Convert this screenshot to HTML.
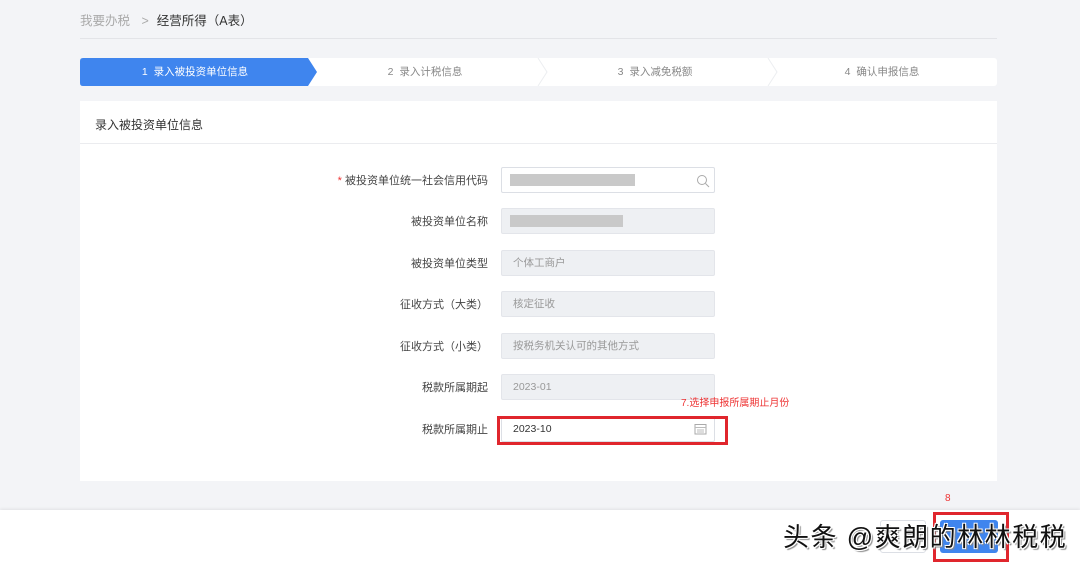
<!DOCTYPE html>
<html><head><meta charset="utf-8"><style>
*{margin:0;padding:0;box-sizing:border-box}
body{width:1080px;height:563px;background:#f3f4f7;font-family:"Liberation Sans","Noto Sans CJK SC",sans-serif;position:relative;overflow:hidden}
.a{position:absolute}
.lbl{position:absolute;right:592px;font-size:11px;color:#444;text-align:right;white-space:nowrap}
.inp{position:absolute;left:501px;width:214px;height:26px;background:#eef0f3;border:1px solid #e3e5ea;border-radius:2px;font-size:10.5px;color:#999;padding-left:11px;line-height:24px}
.gray{position:absolute;left:510px;width:125px;height:12px;background:#c9c9c9}
</style></head><body>
<div class="a" style="left:80px;top:10px;font-size:12.5px;color:#aaa">我要办税 <span style="margin:0 8px">&gt;</span><span style="color:#333">经营所得（A表）</span></div>
<div class="a" style="left:80px;top:38px;width:917px;height:1px;background:#e3e4e8"></div>
<div class="a" style="left:80px;top:58px;width:917px;height:28px;background:#fff;border-radius:3px"></div>
<svg class="a" style="left:80px;top:58px" width="917" height="28">
<path d="M3 0H228L237 14L228 28H3Q0 28 0 25V3Q0 0 3 0Z" fill="#3f85ee"/>
<path d="M458 0L467 14L458 28M688 0L697 14L688 28" fill="none" stroke="#eceef1"/>
</svg>
<div class="a" style="left:80px;top:58px;width:230px;line-height:28px;text-align:center;font-size:10.5px;color:#fff">1&nbsp; 录入被投资单位信息</div>
<div class="a" style="left:310px;top:58px;width:230px;line-height:28px;text-align:center;font-size:10.5px;color:#888">2&nbsp; 录入计税信息</div>
<div class="a" style="left:540px;top:58px;width:230px;line-height:28px;text-align:center;font-size:10.5px;color:#888">3&nbsp; 录入减免税额</div>
<div class="a" style="left:767px;top:58px;width:230px;line-height:28px;text-align:center;font-size:10.5px;color:#888">4&nbsp; 确认申报信息</div>
<div class="a" style="left:80px;top:101px;width:917px;height:380px;background:#fff"></div>
<div class="a" style="left:95px;top:116px;font-size:12px;color:#333">录入被投资单位信息</div>
<div class="a" style="left:80px;top:143px;width:917px;height:1px;background:#ebecef"></div>

<div class="lbl" style="top:172px"><span style="color:#e33">* </span>被投资单位统一社会信用代码</div>
<div class="inp" style="top:167px;background:#fff;border-color:#dcdfe5"></div><div class="gray" style="top:174px"></div>
<svg class="a" style="left:696px;top:174px" width="14" height="14"><circle cx="6" cy="6" r="4.5" fill="none" stroke="#aaa"/><path d="M9.5 9.5L13 13" stroke="#aaa"/></svg>
<div class="lbl" style="top:213px">被投资单位名称</div>
<div class="inp" style="top:208px"></div><div class="gray" style="top:215px;width:113px"></div>
<div class="lbl" style="top:255px">被投资单位类型</div><div class="inp" style="top:250px">个体工商户</div>
<div class="lbl" style="top:296px">征收方式（大类）</div><div class="inp" style="top:291px">核定征收</div>
<div class="lbl" style="top:338px">征收方式（小类）</div><div class="inp" style="top:333px">按税务机关认可的其他方式</div>
<div class="lbl" style="top:379px">税款所属期起</div><div class="inp" style="top:374px">2023-01</div>
<div class="a" style="left:681px;top:394px;font-size:10px;color:#e33">7.选择申报所属期止月份</div>
<div class="lbl" style="top:421px">税款所属期止</div>
<div class="inp" style="top:416px;background:#fff;border-color:#dcdfe5;color:#333">2023-10</div>
<svg class="a" style="left:694px;top:423px" width="13" height="12"><rect x="1" y="1.5" width="11" height="9.5" fill="none" stroke="#aaa"/><path d="M1 4.5H12M3 7H10M3 9H10" stroke="#bbb"/></svg>
<div class="a" style="left:497px;top:416px;width:231px;height:29px;border:3px solid #e0262d"></div>

<div class="a" style="left:0;top:510px;width:1080px;height:53px;background:#fff;box-shadow:0 -1px 3px rgba(0,0,0,.08)"></div>
<div class="a" style="left:945px;top:493px;font-size:10px;color:#e33">8</div>
<div class="a" style="left:880px;top:520px;width:46px;height:33px;border:1px solid #dcdfe5;border-radius:3px;background:#fff"></div>
<div class="a" style="left:940px;top:520px;width:58px;height:33px;background:#3f85ee;border-radius:3px"></div>
<div class="a" style="left:933px;top:512px;width:76px;height:50px;border:3px solid #e0262d"></div>
<div class="a" style="left:783px;top:517px;font-size:26px;letter-spacing:1.5px;color:#111;white-space:nowrap;text-shadow:1px 1px 0 #fff,-1px -1px 0 #fff,1px -1px 0 #fff,-1px 1px 0 #fff,2px 2px 1px #888">头条 @爽朗的林林税税</div>
</body></html>
